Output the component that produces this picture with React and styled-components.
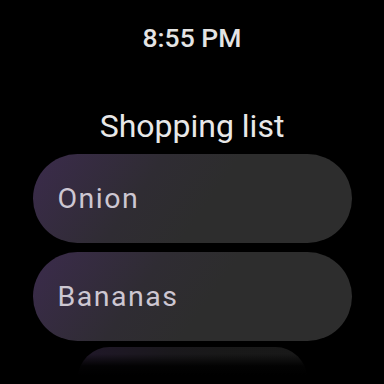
import React from 'react'
import styled, { createGlobalStyle } from 'styled-components'

const Global = createGlobalStyle`
    html, body {
        margin: 0;
        padding: 0;
        background: #000;
    }
    #root {
        width: 384px;
        height: 384px;
    }
`

const items = ['Onion', 'Bananas', '']

const App = () => {
    return (
        <Screen>
            <Global />
            <Time>8:55 PM</Time>
            <Title>Shopping list</Title>
            <List>
                {items.map((item, i) => (
                    <Chip key={i} $far={i === 2}>
                        {item && <Label>{item}</Label>}
                    </Chip>
                ))}
            </List>
            <Fade />
        </Screen>
    )
}

const Screen = styled.div`
    position: relative;
    width: 384px;
    height: 384px;
    overflow: hidden;
    background: #000;
    display: flex;
    flex-direction: column;
    align-items: center;
    font-family: Roboto, "Noto Sans", sans-serif;
`

const Time = styled.div`
    margin-top: 22px;
    height: 32px;
    line-height: 32px;
    font-size: 26.5px;
    font-weight: 500;
    color: #e4e4e4;
`

const Title = styled.div`
    margin-top: 52px;
    height: 40px;
    line-height: 40px;
    font-size: 32px;
    color: #e8e8e8;
`

const List = styled.div`
    margin-top: 8px;
    display: flex;
    flex-direction: column;
    align-items: center;
    gap: 9px;
`

const Chip = styled.div`
    width: 319px;
    height: 89px;
    box-sizing: border-box;
    border-radius: 45px;
    padding: 0 25px;
    display: flex;
    align-items: center;
    background: linear-gradient(125deg, #3b2b4c 0%, #2f2c33 35%, #2d2d2d 55%, #2d2d2d 100%);
    ${({ $far }) => $far && `
        transform: scale(0.72);
        transform-origin: top center;
        margin-top: -3px;
        opacity: 0.55;
    `}
`

const Label = styled.span`
    font-size: 28.5px;
    letter-spacing: 1.5px;
    color: #cdc7d2;
`

const Fade = styled.div`
    position: absolute;
    left: 0;
    right: 0;
    bottom: 0;
    height: 30px;
    background: linear-gradient(to bottom, rgba(0,0,0,0) 0%, rgba(0,0,0,0.9) 40%, #000 70%);
`

export default App
